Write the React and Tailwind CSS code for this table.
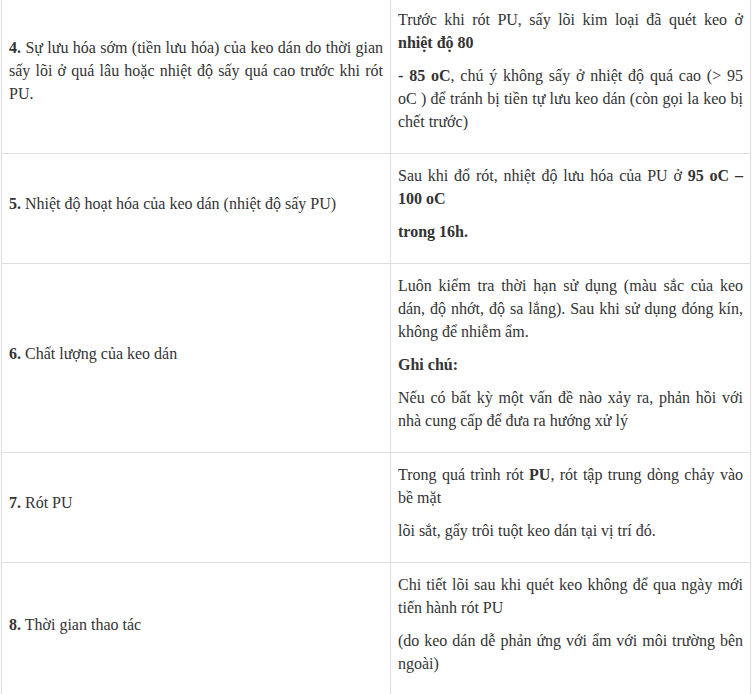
import React from 'react';

const rows = [
    {
        label: <><strong>4.</strong> Sự lưu hóa sớm (tiền lưu hóa) của keo dán do thời gian sấy lõi ở quá lâu hoặc nhiệt độ sấy quá cao trước khi rót PU.</>,
        body: [
            <>Trước khi rót PU, sấy lõi kim loại đã quét keo ở <strong>nhiệt&nbsp;độ&nbsp;80</strong></>,
            <><strong>- 85 oC</strong>, chú ý không sấy ở nhiệt độ quá cao (&gt; 95 oC&nbsp;) để tránh bị tiền tự lưu keo dán (còn gọi la keo bị chết trước)</>,
        ],
    },
    {
        label: <><strong>5.</strong> Nhiệt độ hoạt hóa của keo dán (nhiệt độ sấy PU)</>,
        body: [
            <>Sau khi đổ rót, nhiệt độ lưu hóa của PU ở <strong>95 oC – 100&nbsp;oC</strong></>,
            <strong>trong 16h.</strong>,
        ],
    },
    {
        label: <><strong>6.</strong> Chất lượng của keo dán</>,
        body: [
            <>Luôn kiểm tra thời hạn sử dụng (màu sắc của keo dán, độ nhớt, độ sa lắng). Sau khi sử dụng đóng kín, không để nhiễm ẩm.</>,
            <strong>Ghi chú:</strong>,
            <>Nếu có bất kỳ một vấn đề nào xảy ra, phản hồi với nhà cung cấp để đưa ra hướng xử lý</>,
        ],
    },
    {
        label: <><strong>7.</strong> Rót PU</>,
        body: [
            <>Trong quá trình rót <strong>PU</strong>, rót tập trung dòng chảy vào bề mặt</>,
            <>lõi sắt, gẩy trôi tuột keo dán tại vị trí đó.</>,
        ],
    },
    {
        label: <><strong>8.</strong> Thời gian thao tác</>,
        body: [
            <>Chi tiết lõi sau khi quét keo không để qua ngày mới tiến hành rót PU</>,
            <>(do keo dán dễ phản ứng với ẩm với môi trường bên ngoài)</>,
        ],
    },
];

const App = () => {
    return (
        <div className="bg-white min-h-[694px] pl-[1px] overflow-hidden">
            <table
                className="w-[750px] -mt-[3px] table-fixed border-collapse text-[16px] leading-[23px] text-[#333] text-justify"
                style={{ fontFamily: '"Liberation Serif", "Times New Roman", serif' }}
            >
                <colgroup>
                    <col className="w-[389px]" />
                    <col />
                </colgroup>
                <tbody>
                    {rows.map((row, i) => (
                        <tr key={i}>
                            <td className="border border-[#ddd] px-[7px] py-[10px] align-middle">
                                <p className="mb-[10px]">{row.label}</p>
                            </td>
                            <td className="border border-[#ddd] px-[7px] py-[10px] align-middle">
                                {row.body.map((para, j) => (
                                    <p key={j} className="mb-[10px]">{para}</p>
                                ))}
                            </td>
                        </tr>
                    ))}
                </tbody>
            </table>
        </div>
    );
};

export default App;
